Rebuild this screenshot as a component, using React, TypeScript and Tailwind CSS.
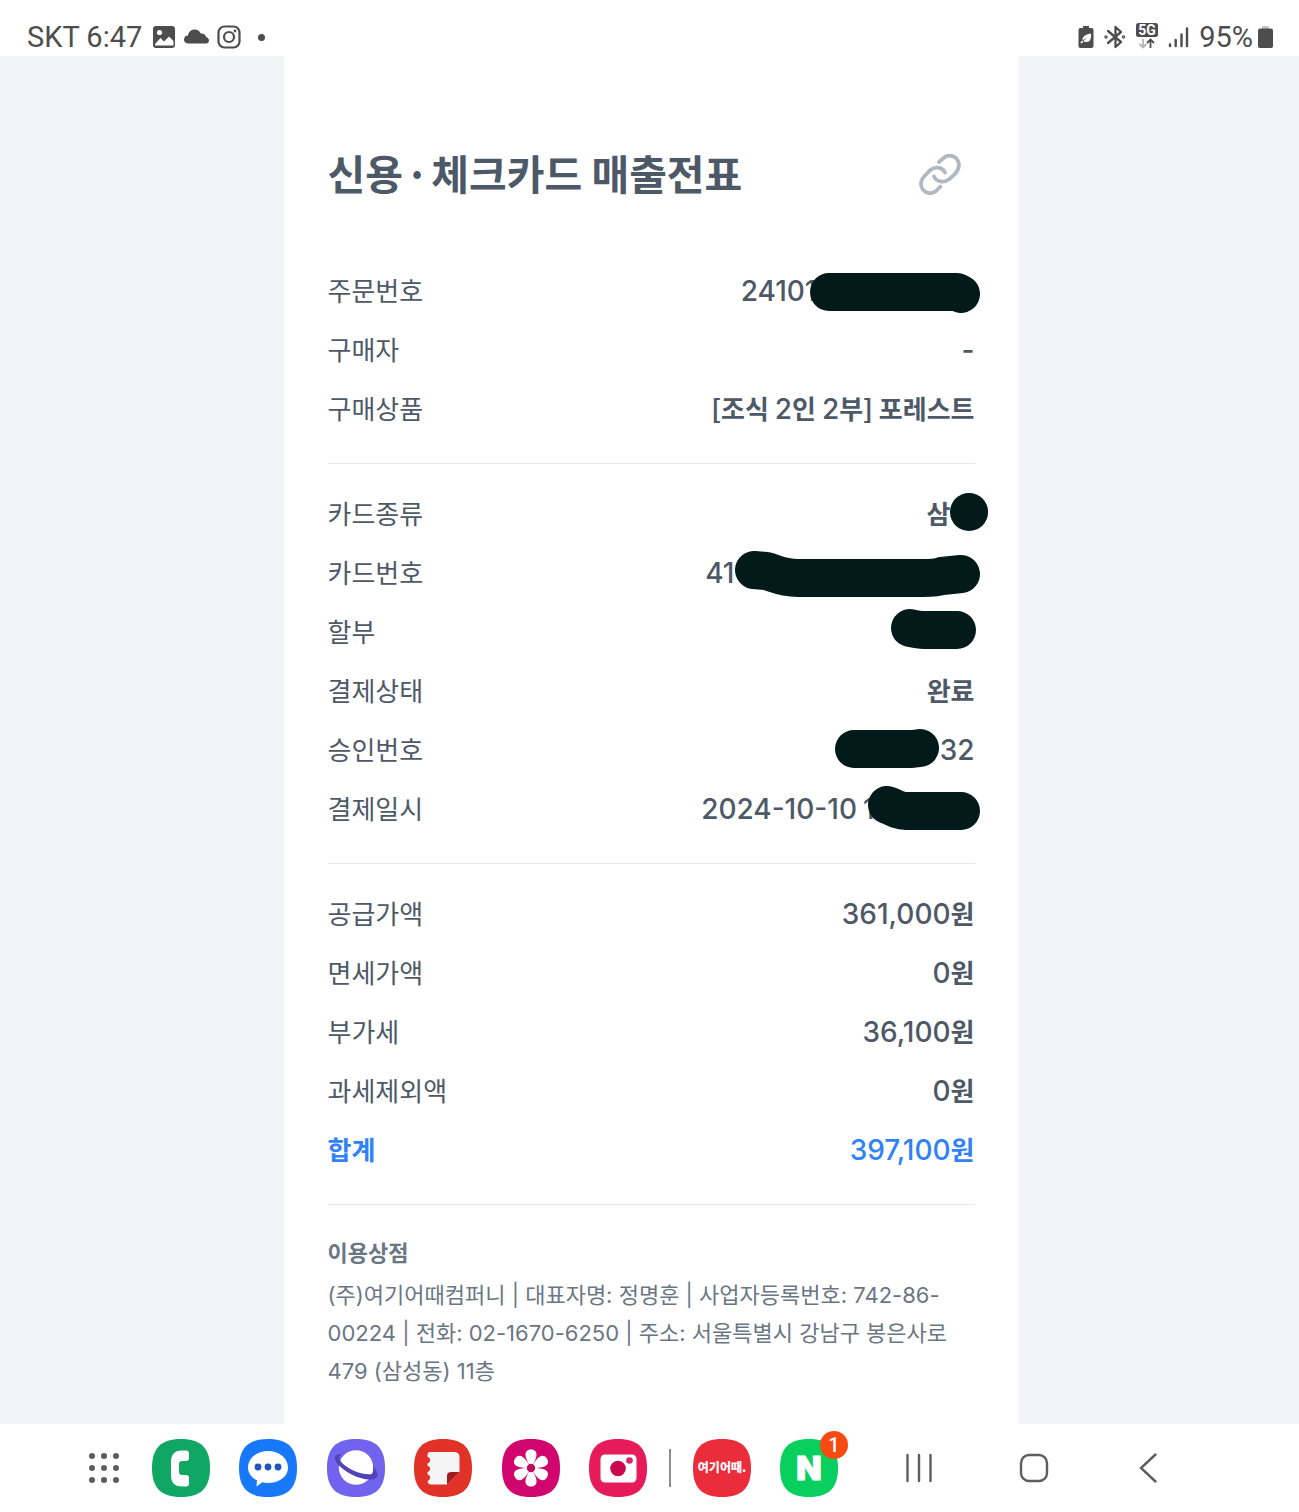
import type { ReactNode } from "react";

interface Row {
  label: string;
  value: string;
  // room kept on the right of the value for the part that is masked
  room?: string;
  mask?: string;
  total?: boolean;
}

const sections: Row[][] = [
  [
    { label: "주문번호", value: "24101", room: "pr-[158px]", mask: "M155 21H283L287 23" },
    { label: "구매자", value: "-" },
    { label: "구매상품", value: "[조식 2인 2부] 포레스트" },
  ],
  [
    { label: "카드종류", value: "삼", room: "pr-[24px]", mask: "M295 18h.1" },
    {
      label: "카드번호",
      value: "41",
      room: "pr-[240px]",
      mask: "M80 17L92 18C100 20 108 25 124 25H249Q262 25 268 23L287 21",
    },
    { label: "할부", value: "", mask: "M236 16Q245 18 250 18H283" },
    { label: "결제상태", value: "완료" },
    { label: "승인번호", value: "32", mask: "M180 19H238L246 18" },
    {
      label: "결제일시",
      value: "2024-10-10 1",
      room: "pr-[100px]",
      mask: "M213 16L216 17C222 20 226 22 232 22H287",
    },
  ],
  [
    { label: "공급가액", value: "361,000원" },
    { label: "면세가액", value: "0원" },
    { label: "부가세", value: "36,100원" },
    { label: "과세제외액", value: "0원" },
    { label: "합계", value: "397,100원", total: true },
  ],
];

export default function App() {
  return (
    <div className="flex min-h-screen flex-col bg-[#f2f4f6] font-['Noto_Sans_CJK_KR',sans-serif]">
      <StatusBar />
      <main className="flex flex-1 justify-center pl-[3px]">
        <article className="w-full max-w-[735px] bg-white px-11 pt-[86px] text-[#4e5968]">
          <header className="flex items-center justify-between pr-[14px]">
            <h1 className="text-[41px] leading-[60px] font-bold">
              신용<span className="mx-[2px]">·</span>체크카드 매출전표
            </h1>
            <button type="button" aria-label="링크 복사" className="mt-[6px] text-[#b0b8c1]">
              <LinkIcon />
            </button>
          </header>

          <div className="pt-[68px]">
            {sections.map((rows, i) => (
              <dl key={i} className="mb-[29px] flex flex-col gap-5 border-b border-[#e5e8eb] pb-[36px]">
                {rows.map((row) => (
                  <ReceiptRow key={row.label} row={row} />
                ))}
              </dl>
            ))}
          </div>

          <section className="font-['Inter','Noto_Sans_CJK_KR',sans-serif] text-[22px] leading-[38px] text-[#6b7684]">
            <h2 className="mb-1 font-semibold">이용상점</h2>
            <p>
              (주)여기어때컴퍼니 | 대표자명: 정명훈 | 사업자등록번호: 742-86-00224 | 전화: 02-1670-6250 | 주소:
              서울특별시 강남구 봉은사로 479 (삼성동) 11층
            </p>
          </section>
        </article>
      </main>
      <Dock />
    </div>
  );
}

// Sets the numbers in a run of Korean text in a latin face, one step larger
function Digits({ text, className }: { text: string; className: string }) {
  return text.split(/([\d,-]+)/).map((part, i) =>
    i % 2 ? (
      <span key={i} className={className}>
        {part}
      </span>
    ) : (
      part
    ),
  );
}

function ReceiptRow({ row }: { row: Row }) {
  return (
    <div
      className={
        row.total
          ? "relative flex justify-between text-[26px] leading-[39px] font-semibold text-[#3182f6]"
          : "relative flex justify-between text-[26px] leading-[39px]"
      }
    >
      <dt>{row.label}</dt>
      <dd className={row.room ? `font-semibold ${row.room}` : "font-semibold"}>
        <Digits text={row.value} className="font-['Inter'] text-[28px] leading-none font-medium" />
      </dd>
      {row.mask && (
        <svg
          className="absolute top-px right-px h-[39px] w-[300px] overflow-visible"
          viewBox="0 0 300 39"
          fill="none"
          stroke="#031a1a"
          strokeWidth="38"
          strokeLinecap="round"
          strokeLinejoin="round"
        >
          <path d={row.mask} />
        </svg>
      )}
    </div>
  );
}

function LinkIcon() {
  return (
    <svg width="42" height="42" viewBox="0 0 42 42" fill="none" stroke="currentColor" strokeWidth="3.800" strokeLinecap="round">
      <path d="M20 8L24 4.500C29 0 36 1 39 7C41 12 39.500 16 36 20L30.500 25C25.500 29 18 28.500 15 22.500" />
      <path d="M26 18.500C23.500 13 16 12 11.500 16L5.500 22C1.500 26 1 31 3.500 35C7 40 13.500 40.500 17.500 36.500L21.500 32.500" />
    </svg>
  );
}

function StatusBar() {
  return (
    <div className="flex h-14 items-center justify-between bg-white pt-[18px] pr-[26px] pl-[27px] font-['Roboto',sans-serif] text-[29px] leading-[38px] text-[#4d4d4d]">
      <div className="flex items-center gap-[10px]">
        <span>SKT 6:47</span>
        <svg width="24" height="24" viewBox="0 0 24 24">
          <rect x="1" y="1" width="22" height="22" rx="3" fill="currentColor" />
          <circle cx="7.500" cy="7.500" r="2.600" fill="#fff" />
          <path d="M3 19L8.500 13L12 16.500L17 11.500L21.500 16V20.500H3Z" fill="#fff" />
        </svg>
        <svg width="25" height="24" viewBox="0 0 25 24" fill="currentColor" className="-ml-[2px]">
          <path d="M5 18.500C1.500 18.500 0 16.500 0 14.500C0 12 2 10.500 4 10.500C4.500 7 7 4.500 10.500 4.500C13.500 4.500 15.500 6 16.800 8.500C19.500 8 21.500 9.500 22 12C24 12.500 25 14 25 15.500C25 17.300 23.700 18.500 22 18.500Z" />
        </svg>
        <svg width="24" height="24" viewBox="0 0 24 24" fill="none" stroke="currentColor" strokeWidth="2.200" className="-ml-[2px]">
          <rect x="1.500" y="1.500" width="21" height="21" rx="6" />
          <circle cx="12" cy="12" r="5" />
          <circle cx="18" cy="6" r="1.400" fill="currentColor" stroke="none" />
        </svg>
        <span className="ml-[7px] size-[7px] rounded-full bg-[#4d4d4d]" />
      </div>

      <div className="flex items-center gap-[10px]">
        <svg width="16" height="24" viewBox="0 0 16 24" fill="currentColor">
          <path d="M5 1h6v2h2.500a2 2 0 0 1 2 2v16a2 2 0 0 1-2 2h-11a2 2 0 0 1-2-2V5a2 2 0 0 1 2-2H5Z" />
          <path d="M13 8.500C13.500 14 12 17 8.500 17C7 17 6 16.600 5.300 16L9.500 12.500L4.600 15.300C4 12 7 9.500 13 8.500ZM2.500 17L5 15.500V17.500L3 18.500Z" fill="#fff" />
        </svg>
        <svg width="22" height="24" viewBox="0 0 22 24" fill="none" stroke="currentColor" strokeWidth="2.300" strokeLinejoin="round" strokeLinecap="round">
          <path d="M4 6L17 17L11.500 22V2L17 7L4 18" />
          <circle cx="2" cy="12" r=".6" />
          <circle cx="19.500" cy="12" r=".6" />
        </svg>
        <svg width="22" height="26" viewBox="0 0 22 26" className="-mt-[3px]">
          <rect width="22" height="14" rx="2.500" fill="currentColor" />
          <text x="11" y="12" textAnchor="middle" fill="#fff" className="text-[14px] font-bold">
            5G
          </text>
          <path d="M7 16V24M3.500 21L7 24.500L10.500 21" fill="none" stroke="#b5b5b5" strokeWidth="1.800" />
          <path d="M14.500 25V17M11 20L14.500 16.500L18 20" fill="none" stroke="currentColor" strokeWidth="1.800" />
        </svg>
        <svg width="21" height="22" viewBox="0 0 21 22" fill="none" stroke="currentColor" strokeWidth="2.400" strokeLinecap="round">
          <path d="M2 18.500V20M7.700 14V20M13.500 8.500V20M19 2.500V20" />
        </svg>
        <span>95%</span>
        <svg width="15" height="22" viewBox="0 0 15 22" className="-ml-[5px]">
          <rect x="4" width="7" height="4" rx="1" fill="#c4c4c4" />
          <rect y="2.500" width="15" height="19.500" rx="2" fill="currentColor" />
        </svg>
      </div>
    </div>
  );
}

function AppButton({ label, color, children }: { label: string; color: string; children: ReactNode }) {
  return (
    <button type="button" aria-label={label} className="relative shrink-0">
      <svg width="58" height="58" viewBox="0 0 58 58">
        <path d="M29 0C49 0 58 9 58 29S49 58 29 58 0 49 0 29 9 0 29 0Z" fill={color} />
        {children}
      </svg>
    </button>
  );
}

function Dock() {
  return (
    <nav className="flex h-[88px] items-center justify-between bg-white pr-[137px] pl-[86px] text-[#5e5e5e]">
      <div className="flex items-center gap-[22px]">
        <button type="button" aria-label="앱 서랍" className="mr-2">
          <svg width="36" height="36" viewBox="0 0 36 36" fill="currentColor">
            {[6, 18, 30].map((y) => [6, 18, 30].map((x) => <circle key={`${x}-${y}`} cx={x} cy={y} r="3" />))}
          </svg>
        </button>

        <div className="flex w-[495px] items-center justify-between">
          <AppButton label="전화" color="#10a663">
            <path d="M30 11.500H34Q37 11.500 37 14.500V19Q37 22 34 22H30Q27 22 27 25V33Q27 36 30 36H34Q37 36 37 39V44.500Q37 47.500 34 47.500H30C22 47.500 19 43 19 36V23C19 16 22 11.500 30 11.500Z" fill="#fff" />
          </AppButton>
          <AppButton label="메시지" color="#1778f9">
            <path d="M29 12C40 12 49 19 49 28.500S40 44 29 44C27 44 25 43.800 23.300 43.300L17.500 47.500L18 41.300C12.500 38.500 9 34 9 28.500C9 19 18 12 29 12Z" fill="#fff" />
            <circle cx="19" cy="28" r="3.400" fill="#1b55c4" />
            <circle cx="29" cy="28" r="3.400" fill="#1b55c4" />
            <circle cx="39" cy="28" r="3.400" fill="#1b55c4" />
          </AppButton>
          <AppButton label="인터넷" color="#7263ee">
            <circle cx="29" cy="28.500" r="17.200" fill="#fff" />
            <path d="M15 15.500C8 14.500 6 18 9.500 23.500C16 32.500 32 41 44 40.500C51 40 52 36 49 31L46 27C46.500 30 47 32.500 45.500 35C35 36.500 19 30 13.500 22C11.500 19 12 16.500 15 15.500Z" fill="#5144b5" />
          </AppButton>
          <AppButton label="노트" color="#e03226">
            <path d="M16 13H40Q45.500 13 45.500 18V33L33 45.500H17Q14 45.500 13.500 42C17 41 17 36 13.500 35.500V33C17 32 17 27.500 13.500 27V24.500C17 23.500 17 19 13.500 18Q13 13 16 13Z" fill="#f5f5f5" />
            <path d="M33 45.500V37Q33 33 37 33H45.500Z" fill="#9f1d20" />
          </AppButton>
          <AppButton label="갤러리" color="#d0056e">
            {[0, 60, 120, 180, 240, 300].map((a) => (
              <path
                key={a}
                d="M29 29C26 24 23.500 19 23.500 15.500C23.500 12 26 10.500 29 10.500S34.500 12 34.500 15.500C34.500 19 32 24 29 29Z"
                fill="#fff"
                transform={`rotate(${a} 29 29)`}
              />
            ))}
            <circle cx="29" cy="29" r="4.200" fill="#c00a5b" />
          </AppButton>
          <AppButton label="카메라" color="#e51b5a">
            <rect x="11.500" y="15.500" width="36" height="28" rx="4.500" fill="#fff" />
            <circle cx="29" cy="29.500" r="7.800" fill="#c9084f" />
            <circle cx="40.500" cy="21.500" r="3.300" fill="#df2362" />
          </AppButton>
        </div>

        <span className="h-[38px] w-[2px] bg-[#8e8e8e]" />

        <div className="flex gap-[29px]">
          <AppButton label="여기어때" color="#ea2c3b">
            <text x="29" y="33" textAnchor="middle" fill="#fff" className="text-[12px] font-black">
              여기어때.
            </text>
          </AppButton>
          <div className="relative flex">
            <AppButton label="네이버" color="#09cf5f">
              <text x="29" y="41" textAnchor="middle" fill="#fff" stroke="#fff" className="font-['Inter'] text-[33px] font-black">
                N
              </text>
            </AppButton>
            <span className="absolute -top-2 -right-[10px] flex size-7 items-center justify-center rounded-full bg-[#f74b12] font-['Roboto',sans-serif] text-[20px] leading-7 font-medium text-white">
              1
            </span>
          </div>
        </div>
      </div>

      <div className="flex w-[257px] items-center justify-between">
        <button type="button" aria-label="최근 앱">
          <svg width="28" height="30" viewBox="0 0 28 30" stroke="currentColor" strokeWidth="2.400" strokeLinecap="round">
            <path d="M2.500 2V28M14 2V28M25.500 2V28" />
          </svg>
        </button>
        <button type="button" aria-label="홈">
          <svg width="30" height="30" viewBox="0 0 30 30" fill="none" stroke="currentColor" strokeWidth="2.400">
            <rect x="2" y="2" width="26" height="26" rx="8" />
          </svg>
        </button>
        <button type="button" aria-label="뒤로">
          <svg width="28" height="30" viewBox="0 0 28 30" fill="none" stroke="currentColor" strokeWidth="2.400" strokeLinecap="round">
            <path d="M21.500 1.500L7 15L21.500 28.500" />
          </svg>
        </button>
      </div>
    </nav>
  );
}
